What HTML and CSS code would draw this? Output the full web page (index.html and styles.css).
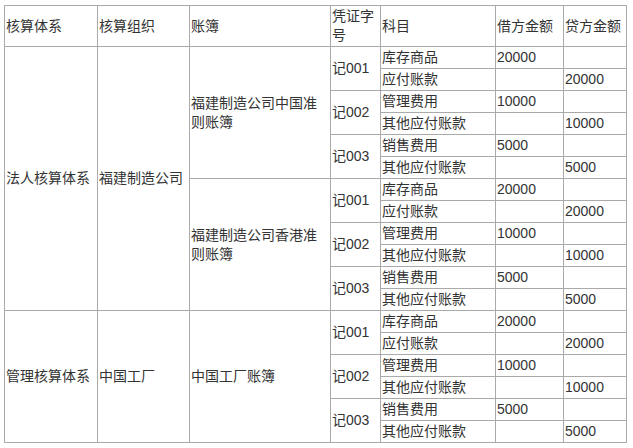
FILE: index.html
```html
<!DOCTYPE html>
<html lang="zh-CN">
<head>
<meta charset="utf-8">
<title>核算体系</title>
<link rel="stylesheet" href="styles.css">
</head>
<body>
<table class="ledger">
  <colgroup>
    <col class="c1"><col class="c2"><col class="c3"><col class="c4"><col class="c5"><col class="c6"><col class="c7">
  </colgroup>
  <thead>
    <tr><th>核算体系</th><th>核算组织</th><th>账簿</th><th>凭证字号</th><th>科目</th><th>借方金额</th><th>贷方金额</th></tr>
  </thead>
  <tbody>
    <tr><td rowspan="12">法人核算体系</td><td rowspan="12">福建制造公司</td><td rowspan="6">福建制造公司中国准则账簿</td><td rowspan="2">记001</td><td>库存商品</td><td>20000</td><td></td></tr>
    <tr><td>应付账款</td><td></td><td>20000</td></tr>
    <tr><td rowspan="2">记002</td><td>管理费用</td><td>10000</td><td></td></tr>
    <tr><td>其他应付账款</td><td></td><td>10000</td></tr>
    <tr><td rowspan="2">记003</td><td>销售费用</td><td>5000</td><td></td></tr>
    <tr><td>其他应付账款</td><td></td><td>5000</td></tr>
    <tr><td rowspan="6">福建制造公司香港准则账簿</td><td rowspan="2">记001</td><td>库存商品</td><td>20000</td><td></td></tr>
    <tr><td>应付账款</td><td></td><td>20000</td></tr>
    <tr><td rowspan="2">记002</td><td>管理费用</td><td>10000</td><td></td></tr>
    <tr><td>其他应付账款</td><td></td><td>10000</td></tr>
    <tr><td rowspan="2">记003</td><td>销售费用</td><td>5000</td><td></td></tr>
    <tr><td>其他应付账款</td><td></td><td>5000</td></tr>
    <tr><td rowspan="6">管理核算体系</td><td rowspan="6">中国工厂</td><td rowspan="6">中国工厂账簿</td><td rowspan="2">记001</td><td>库存商品</td><td>20000</td><td></td></tr>
    <tr><td>应付账款</td><td></td><td>20000</td></tr>
    <tr><td rowspan="2">记002</td><td>管理费用</td><td>10000</td><td></td></tr>
    <tr><td>其他应付账款</td><td></td><td>10000</td></tr>
    <tr><td rowspan="2">记003</td><td>销售费用</td><td>5000</td><td></td></tr>
    <tr><td>其他应付账款</td><td></td><td>5000</td></tr>
  </tbody>
</table>
</body>
</html>
```

FILE: styles.css
```css
html, body {
  margin: 0;
  padding: 0;
  background: #fff;
}

body {
  padding: 5px 0 0 4px;
  font-family: "Liberation Sans", "Noto Sans CJK SC", sans-serif;
  font-size: 14px;
  color: #333;
}

.ledger {
  border-collapse: collapse;
  table-layout: fixed;
  width: 622px;
}

.ledger .c1 { width: 93px; }
.ledger .c2 { width: 92px; }
.ledger .c3 { width: 141px; }
.ledger .c4 { width: 50px; }
.ledger .c5 { width: 115px; }
.ledger .c6 { width: 68px; }
.ledger .c7 { width: 63px; }

.ledger th,
.ledger td {
  border: 1px solid #aaa;
  padding: 1px 1px 1px 1px;
  line-height: 19px;
  text-align: left;
  vertical-align: middle;
  font-weight: normal;
  word-break: break-all;
}
```
